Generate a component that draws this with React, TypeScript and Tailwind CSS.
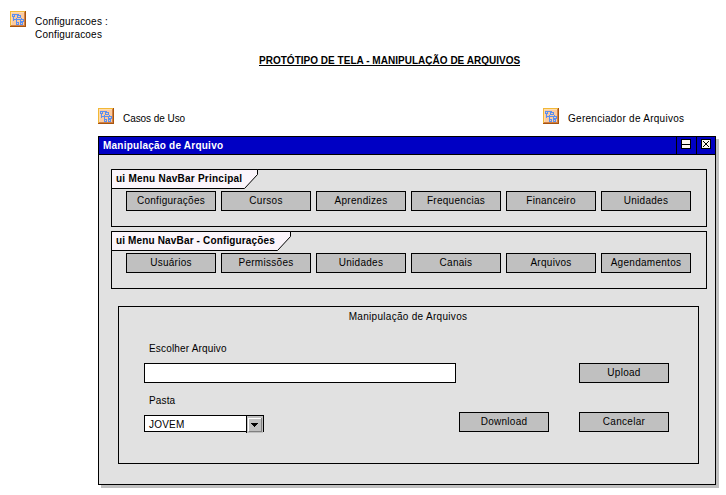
const textBase = "whitespace-nowrap text-[10px] leading-[13px]";

function DiagramIcon() {
  return (
    <svg width="16" height="16" viewBox="0 0 16 16" shapeRendering="crispEdges" className="block shrink-0">
      <rect width="16" height="16" fill="#a8540c" />
      <rect width="15" height="15" fill="#f2b836" />
      <rect x="1" y="1" width="14" height="14" fill="#d08048" />
      <rect x="1" y="1" width="13" height="13" fill="#fddcae" />
      <rect x="2" y="2" width="12" height="12" fill="#fbcba0" />
      <g fill="none" stroke="#5a8ff0">
        <path d="M2.500 3.500h2v2h-2zM5 3.500h3M7.500 4.500h3v2h-3zM8.500 3v2" />
        <path d="M3.500 6v4M4 8.500h2M6.500 7v5M7 8.500h3M11.500 7v2" />
        <path d="M10.500 8.500h3v2h-3zM6.500 11.500h2v2h-2zM10.500 11.500h2v2h-2z" />
      </g>
    </svg>
  );
}

function Button({ label, tracking = "tracking-[0.28px]" }: { label: string; tracking?: string }) {
  return (
    <button className={`flex h-5 w-[90px] shrink-0 items-center justify-center border border-black bg-[#c0c0c0] pb-[2px] ${textBase} ${tracking}`}>
      {label}
    </button>
  );
}

function Frame({ title, width, tracking, items }: { title: string; width: number; tracking: string; items: string[] }) {
  return (
    <section className="h-[58px] w-[596px] border border-black">
      <div className="-ml-px -mt-px grid h-5">
        <svg width={width} height="20" className="col-start-1 row-start-1 block">
          <path d={`M.5 .5H${width - 0.5}V5.500L${width - 13.5} 19.500H.5Z`} fill="#fbf5fb" stroke="black" />
        </svg>
        <h2 className={`col-start-1 row-start-1 pl-[5px] pt-[3px] font-bold ${textBase} ${tracking}`}>{title}</h2>
      </div>
      <nav className="ml-[14px] mt-[2px] flex gap-[5px]">
        {items.map((item) => (
          <Button key={item} label={item} />
        ))}
      </nav>
    </section>
  );
}

export default function App() {
  return (
    <main className="h-[495px] w-[726px] overflow-hidden bg-white font-['Liberation_Sans',Arial,sans-serif] text-black">
      <header className="flex h-[54px] gap-[9px] pl-[10px] pt-[11px]">
        <DiagramIcon />
        <p className={`pt-1 tracking-[0.2px] ${textBase}`}>
          Configuracoes :<br />Configuracoes
        </p>
      </header>
      <h1 className={`ml-[259px] h-[54px] font-bold tracking-[0.02px] ${textBase}`}>
        <span className="inline-block h-[12px] border-b border-black">PROTÓTIPO DE TELA - MANIPULAÇÃO DE ARQUIVOS</span>
      </h1>
      <div className="flex h-7 pl-[98px]">
        <div className="flex w-[445px] gap-[9px]">
          <DiagramIcon />
          <span className={`pt-1 tracking-[-0.06px] ${textBase}`}>Casos de Uso</span>
        </div>
        <div className="flex gap-[9px]">
          <DiagramIcon />
          <span className={`pt-1 tracking-[0.27px] ${textBase}`}>Gerenciador de Arquivos</span>
        </div>
      </div>
      <div className="ml-[98px] h-[349px] w-[618px] border border-black bg-[#e1e1e1] shadow-[3px_3px_0_#c0c0c0]">
        <div className="flex h-[18px] border-b border-black bg-[#0000c4]">
          <h2 className={`flex-1 pl-1 pt-[2px] font-bold tracking-[0.23px] text-white ${textBase}`}>Manipulação de Arquivo</h2>
          <span className="flex w-5 border-l border-black pl-1 pt-[2px]">
            <svg width="10" height="10" shapeRendering="crispEdges">
              <rect x=".5" y=".5" width="9" height="9" fill="#fff8f0" stroke="black" />
              <path d="M1 5.500h8" stroke="black" />
            </svg>
          </span>
          <span className="flex w-[19px] border-l border-black pl-1 pt-[2px]">
            <svg width="10" height="10">
              <rect x=".5" y=".5" width="9" height="9" fill="#fff8f0" stroke="black" />
              <path d="M2 2l6 6M8 2l-6 6" stroke="black" />
            </svg>
          </span>
        </div>
        <div className="flex flex-col gap-1 pl-3 pt-[14px]">
          <Frame title="ui Menu NavBar Principal" width={147} tracking="tracking-[0.24px]"
            items={["Configurações", "Cursos", "Aprendizes", "Frequencias", "Financeiro", "Unidades"]} />
          <Frame title="ui Menu NavBar - Configurações" width={180} tracking="tracking-[0.15px]"
            items={["Usuários", "Permissões", "Unidades", "Canais", "Arquivos", "Agendamentos"]} />
        </div>
        <section className="ml-[19px] mt-[17px] h-[158px] w-[581px] border border-black pl-[25px]">
          <h3 className={`-ml-[26px] pt-[3px] text-center tracking-[0.3px] ${textBase}`}>Manipulação de Arquivos</h3>
          <label className={`mt-[19px] block pl-[5px] tracking-[0.17px] ${textBase}`}>Escolher Arquivo</label>
          <div className="mt-[8px] flex gap-[123px]">
            <div className="h-5 w-[312px] border border-black bg-white" />
            <Button label="Upload" />
          </div>
          <label className={`mt-[11px] block pl-[5px] tracking-[0.15px] ${textBase}`}>Pasta</label>
          <div className="mt-[5px] flex">
            <div className="mt-[3px] flex h-[17px] w-[120px] border border-black bg-white">
              <span className={`w-[101px] pl-1 pt-[2px] tracking-[0.2px] ${textBase}`}>JOVEM</span>
              <span className="flex h-[17px] w-[17px] border-l border-black bg-[#c0c0c0] pt-px">
                <svg width="16" height="16" shapeRendering="crispEdges">
                  <path d="M0 0h16v16H0z" fill="#c0c0c0" />
                  <path d="M1.500 14V1.500h13" fill="none" stroke="white" />
                  <path d="M2 14.500h12.500V1" fill="none" stroke="#808080" />
                  <path d="M4 6h7v1H4zM5 7h5v1H5zM6 8h3v1H6zM7 9h1v1H7z" />
                </svg>
              </span>
            </div>
            <div className="ml-[195px] flex gap-[30px]">
              <Button label="Download" />
              <Button label="Cancelar" />
            </div>
          </div>
        </section>
      </div>
    </main>
  );
}
